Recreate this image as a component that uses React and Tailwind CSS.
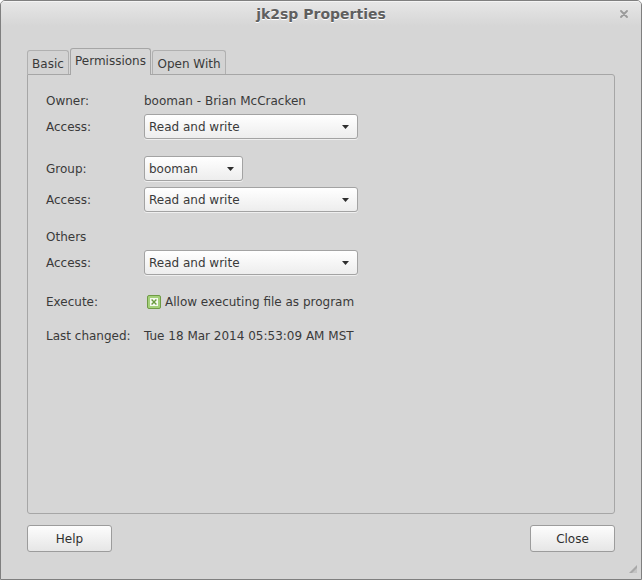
import React from "react";

const Combo = ({ value, width }) => (
  <div
    className={`${width} h-[25px] flex items-center justify-between pl-[4px] pr-[8px] rounded-[3px] border border-[#a3a3a3] bg-gradient-to-b from-[#ffffff] to-[#ededed] shadow-[0_1px_0_rgba(255,255,255,0.6)]`}
  >
    <span>{value}</span>
    <svg width="7" height="4" viewBox="0 0 7 4">
      <path d="M0 0 L7 0 L3.5 4 Z" fill="#2e2e2e" />
    </svg>
  </div>
);

const Row = ({ label, children, className = "" }) => (
  <div className={`flex items-center ${className}`}>
    <div className="w-[98px] shrink-0">{label}</div>
    {children}
  </div>
);

const Tab = ({ label, active, width }) =>
  active ? (
    <div
      className={`${width} h-[27px] -mb-px relative z-10 flex items-center justify-center pb-[3px] border border-b-0 border-[#a6a6a6] rounded-t-[3px] bg-[#d6d6d6]`}
    >
      {label}
    </div>
  ) : (
    <div
      className={`${width} h-[24px] flex items-center justify-center pt-[2px] border border-b-0 border-[#b0b0b0] rounded-t-[3px] bg-[#d3d3d3]`}
    >
      {label}
    </div>
  );

const Button = ({ label }) => (
  <button className="w-[85px] h-[27px] rounded-[3px] border border-[#9c9c9c] bg-gradient-to-b from-[#fdfdfd] to-[#e6e6e6] text-[#2f2f2f]">
    {label}
  </button>
);

export default function App() {
  return (
    <div className="w-[642px] h-[580px] relative flex flex-col overflow-hidden rounded-t-[5px] border border-[#7f7f7f] bg-[#d6d6d6] text-[12px] text-[#3a3a3a] font-['DejaVu_Sans',sans-serif]">
      <div className="h-[25px] shrink-0 relative flex items-center justify-center bg-gradient-to-b from-[#e6e6e6] to-[#d6d6d6] border-t border-[#f4f4f4]">
        <span className="text-[14px] font-bold text-[#5f5f5f] [text-shadow:0_1px_0_#ffffff]">
          jk2sp Properties
        </span>
        <svg
          className="absolute right-[13px] top-[8px]"
          width="8"
          height="8"
          viewBox="0 0 8 8"
        >
          <path
            d="M1 1 L7 7 M7 1 L1 7"
            stroke="#9a9a9a"
            strokeWidth="1.8"
            strokeLinecap="round"
          />
        </svg>
      </div>

      <div className="px-[26px] pt-[22px] flex flex-col">
        <div className="flex items-end gap-[1px] h-[26px]">
          <Tab label="Basic" width="w-[42px]" />
          <Tab label="Permissions" width="w-[81px]" active />
          <Tab label="Open With" width="w-[74px]" />
        </div>

        <div className="h-[440px] border border-[#a6a6a6] rounded-b-[3px] rounded-tr-[3px] pt-[16px] pl-[18px]">
          <Row label="Owner:" className="h-[20px]">
            <span>booman - Brian McCracken</span>
          </Row>
          <Row label="Access:" className="mt-[3px]">
            <Combo value="Read and write" width="w-[214px]" />
          </Row>

          <Row label="Group:" className="mt-[17px]">
            <Combo value="booman" width="w-[99px]" />
          </Row>
          <Row label="Access:" className="mt-[6px]">
            <Combo value="Read and write" width="w-[214px]" />
          </Row>

          <div className="h-[20px] mt-[15px] flex items-center">Others</div>
          <Row label="Access:" className="mt-[3px]">
            <Combo value="Read and write" width="w-[214px]" />
          </Row>

          <Row label="Execute:" className="h-[20px] mt-[17px]">
            <div className="flex items-center">
              <svg
                className="ml-[3px] mr-[4px]"
                width="14"
                height="14"
                viewBox="0 0 14 14"
              >
                <rect
                  x="0.5"
                  y="0.5"
                  width="13"
                  height="13"
                  rx="1.5"
                  fill="#a4d07a"
                  stroke="#6f9b45"
                />
                <rect x="3" y="3" width="8" height="8" fill="#f4f9ee" />
                <path
                  d="M4.6 4.6 L9.4 9.4 M9.4 4.6 L4.6 9.4"
                  stroke="#6a9a40"
                  strokeWidth="1.4"
                />
              </svg>
              <span>Allow executing file as program</span>
            </div>
          </Row>

          <Row label="Last changed:" className="h-[20px] mt-[14px]">
            <span>Tue 18 Mar 2014 05:53:09 AM MST</span>
          </Row>
        </div>

        <div className="mt-[11px] flex justify-between">
          <Button label="Help" />
          <Button label="Close" />
        </div>
      </div>

      <svg
        className="absolute right-[4px] bottom-[6px]"
        width="8"
        height="8"
        viewBox="0 0 8 8"
      >
        <path d="M8 0 L8 8 L0 8 Z" fill="#a8a8a8" />
        <path d="M8 3 L8 8 L3 8 Z" fill="#c4c4c4" />
      </svg>
    </div>
  );
}
